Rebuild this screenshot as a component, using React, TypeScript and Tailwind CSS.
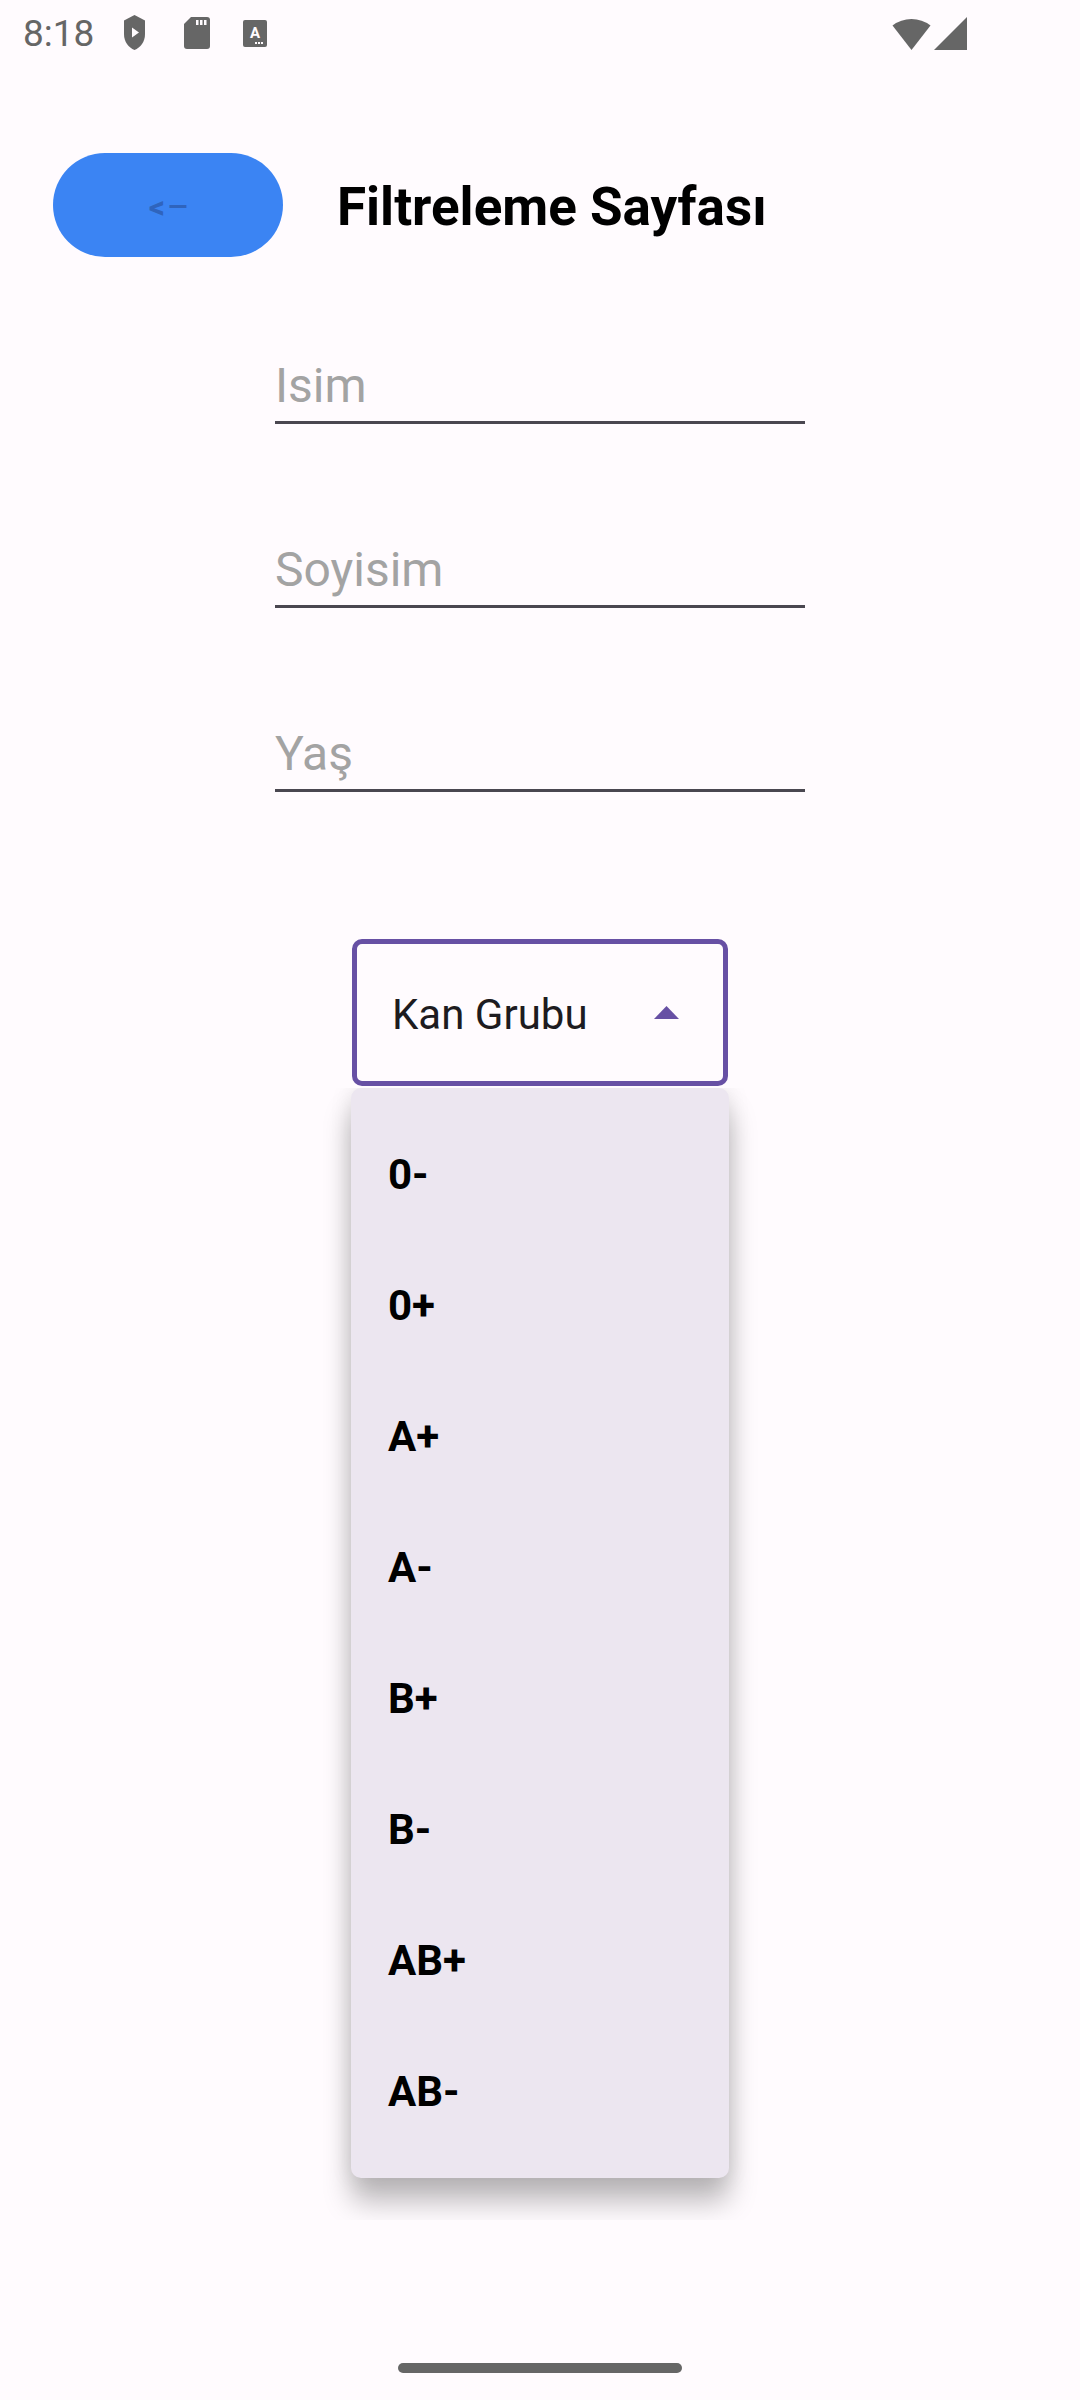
const bloodGroups = ["0-", "0+", "A+", "A-", "B+", "B-", "AB+", "AB-"];
const fields = ["Isim", "Soyisim", "Yaş"];

const StatusBar = () => (
  <div className="flex h-[66px] items-center pl-[23px] pr-[113px] text-[#666]">
    <span className="text-[37px] leading-none font-['Roboto',sans-serif]">8:18</span>
    {/* play protect */}
    <svg width="21" height="35" viewBox="0 0 21 35" className="ml-[30px] mt-[-2px]">
      <path d="M10.5 0 L21 5.5 V19 C21 27 16.5 32.5 10.5 35 C4.5 32.5 0 27 0 19 V5.5 Z" fill="#666" />
      <path d="M8 12.5 L15 17.5 L8 22.5 Z" fill="#fffbfe" />
    </svg>
    {/* sd card */}
    <svg width="26" height="32" viewBox="0 0 26 32" className="ml-[39px]">
      <path d="M7 0 H23 Q26 0 26 3 V29 Q26 32 23 32 H3 Q0 32 0 29 V7 Z" fill="#666" />
      <rect x="12" y="3" width="2.5" height="5" fill="#fffbfe" />
      <rect x="16" y="3" width="2.5" height="5" fill="#fffbfe" />
      <rect x="20" y="3" width="2.5" height="5" fill="#fffbfe" />
    </svg>
    {/* text icon */}
    <svg width="24" height="27" viewBox="0 0 24 27" className="ml-[33px]">
      <rect width="24" height="27" rx="2" fill="#666" />
      <text x="12" y="18" textAnchor="middle" fontSize="15" fontWeight="700" fill="#fffbfe" fontFamily="Roboto, sans-serif">A</text>
      <rect x="12" y="22" width="2" height="2" fill="#fffbfe" />
      <rect x="15" y="22" width="2" height="2" fill="#fffbfe" />
      <rect x="18" y="22" width="2" height="2" fill="#fffbfe" />
    </svg>
    <div className="flex-1" />
    {/* wifi */}
    <svg width="39" height="33" viewBox="0 0 39 33">
      <path d="M19.5 33 L0.5 8.5 A31 31 0 0 1 38.5 8.5 Z" fill="#666" />
    </svg>
    {/* signal */}
    <svg width="33" height="33" viewBox="0 0 33 33" className="ml-[3px]">
      <path d="M33 0 V33 H0 Z" fill="#666" />
    </svg>
  </div>
);

const App = () => {
  return (
    <div className="relative flex h-[2400px] w-[1080px] flex-col overflow-hidden bg-[#fffbfe] font-['Roboto',sans-serif]">
      <StatusBar />

      <div className="mt-[87px] flex items-center pl-[53px]">
        <button className="flex h-[104px] w-[230px] items-center justify-center gap-[3px] rounded-full bg-[#3b84f3] pt-[4px] font-bold leading-none text-[#2f64bd]">
          <span className="text-[32px]">&lt;</span>
          <span className="text-[25px]">—</span>
        </button>
        <h1 className="ml-[54px] pt-[6px] text-[53px] font-bold text-black">Filtreleme Sayfası</h1>
      </div>

      <div className="mt-[101px] flex flex-col items-center gap-[118px]">
        {fields.map((f) => (
          <div key={f} className="w-[530px] border-b-[3px] border-[#4a4750] pb-[7px]">
            <div className="text-[48px] leading-[56px] text-[#a3a3a3]">{f}</div>
          </div>
        ))}
      </div>

      <div className="mt-[147px] flex h-[147px] w-[376px] items-center justify-between self-center rounded-[10px] border-[5px] border-[#6750a4] pl-[35px] pr-[44px]">
        <span className="pt-[3px] text-[42px] text-[#1d1b20]">Kan Grubu</span>
        <svg width="25" height="13" viewBox="0 0 25 13">
          <path d="M12.5 0 L25 13 H0 Z" fill="#6750a4" />
        </svg>
      </div>

      <div className="mt-auto mb-[27px] h-[10px] w-[284px] self-center rounded-full bg-[#666]" />

      {/* dropdown menu popup */}
      <div className="absolute left-[323px] top-[1088px] h-[1132px] w-[440px] overflow-hidden">
        <div className="ml-[28px] flex h-[1090px] w-[378px] flex-col rounded-[10px] bg-[#ece6f0] pt-[21px] shadow-[0_24px_28px_rgba(0,0,0,0.26),0_0_22px_rgba(0,0,0,0.1)]">
          {bloodGroups.map((g) => (
            <div key={g} className="flex h-[131px] items-center pl-[37px] text-[42px] font-bold text-black">
              {g}
            </div>
          ))}
        </div>
      </div>
    </div>
  );
};

export default App;
